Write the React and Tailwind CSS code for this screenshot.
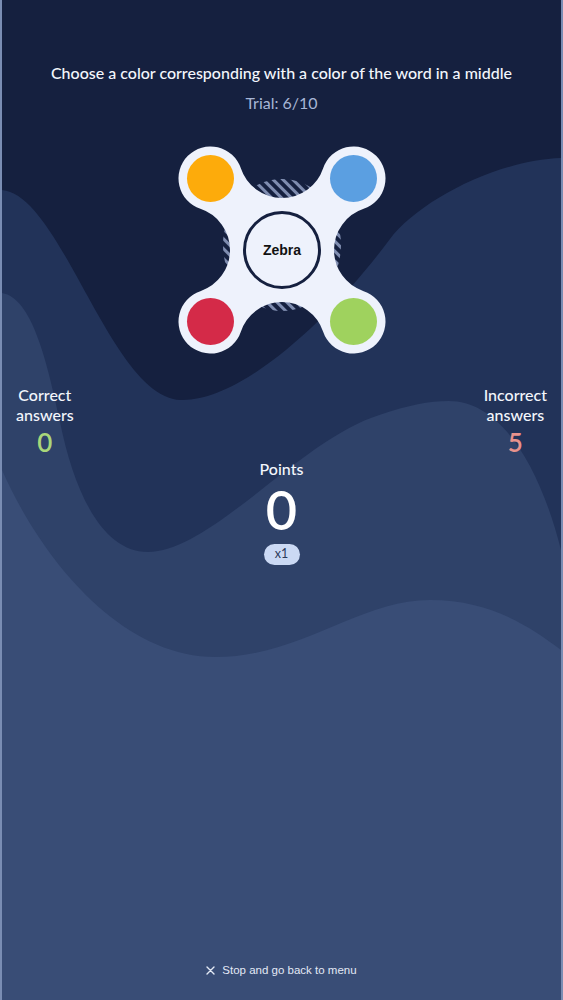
import React from "react";

function Waves() {
  return (
    <svg
      className="absolute inset-0 w-full h-full"
      viewBox="0 0 563 1000"
      preserveAspectRatio="none"
    >
      <rect x="0" y="0" width="563" height="1000" fill="#15203f" />
      <path
        d="M0,190 C60,195 110,398 180,400 C240,402 330,320 390,240 C420,200 500,160 563,158 L563,1000 L0,1000 Z"
        fill="#223359"
      />
      <path
        d="M0,293 C30,298 45,360 58,420 C72,490 100,552 147,552 C210,552 300,440 380,415 C410,405 430,401 450,401 C500,401 540,460 563,550 L563,1000 L0,1000 Z"
        fill="#2f4269"
      />
      <path
        d="M0,470 C40,560 120,657 215,657 C300,657 360,600 431,600 C490,600 530,625 563,650 L563,1000 L0,1000 Z"
        fill="#394d76"
      />
    </svg>
  );
}

function Spinner() {
  const body =
    "M -41.15 -81.64 A 43.38 43.38 0 0 0 41.15 -81.64 A 32 32 0 1 1 81.64 -41.15 " +
    "A 43.38 43.38 0 0 0 81.64 41.15 A 32 32 0 1 1 41.15 81.64 " +
    "A 43.38 43.38 0 0 0 -41.15 81.64 A 32 32 0 1 1 -81.64 41.15 " +
    "A 43.38 43.38 0 0 0 -81.64 -41.15 A 32 32 0 1 1 -41.15 -81.64 Z";
  return (
    <svg width="220" height="220" viewBox="-110 -110 220 220" className="block">
      <defs>
        <pattern
          id="hatch"
          patternUnits="userSpaceOnUse"
          width="7"
          height="7"
          patternTransform="rotate(-45)"
        >
          <rect x="0" y="0" width="3" height="7" fill="#7f8db0" />
        </pattern>
      </defs>
      <ellipse cx="0" cy="-5" rx="59" ry="66" fill="url(#hatch)" />
      <path d={body} fill="#eef2fc" />
      <circle cx="-71.5" cy="-71.5" r="23.5" fill="#fdab0b" />
      <circle cx="71.5" cy="-71.5" r="23.5" fill="#5b9fe1" />
      <circle cx="-71.5" cy="71.5" r="23.5" fill="#d42a48" />
      <circle cx="71.5" cy="71.5" r="23.5" fill="#9fd25e" />
      <circle cx="0" cy="0" r="37.5" fill="#eef2fc" stroke="#15203f" strokeWidth="3" />
      <text
        x="0"
        y="5"
        textAnchor="middle"
        fontFamily="'Liberation Sans', Arial, sans-serif"
        fontWeight="700"
        fontSize="14"
        fill="#111111"
      >
        Zebra
      </text>
    </svg>
  );
}

export default function App() {
  return (
    <div
      className="relative h-[1000px] w-full overflow-hidden border-x-2 border-[#7a8db3] bg-[#15203f] text-white"
      style={{ fontFamily: "Lato, 'Noto Sans', sans-serif" }}
    >
      <Waves />
      <div className="relative z-10 flex h-full flex-col items-center">
        <h1 className="pt-[61px] text-[16px] font-medium leading-[24px] text-[#f3f6fc]">
          Choose a color corresponding with a color of the word in a middle
        </h1>
        <div className="mt-[6px] text-[16px] leading-[24px] text-[#a7b6d6]">Trial: 6/10</div>
        <div className="mt-[25px]">
          <Spinner />
        </div>
        <div className="mt-[25px] flex w-full justify-between px-[14px]">
          <div className="flex flex-col items-center text-center">
            <div className="text-[16px] font-medium leading-[20px] text-[#f3f6fc]">
              Correct
              <br />
              answers
            </div>
            <div className="mt-[2px] text-[26px] font-semibold leading-[30px] text-[#a9d77a]">0</div>
          </div>
          <div className="flex flex-col items-center text-center">
            <div className="text-[16px] font-medium leading-[20px] text-[#f3f6fc]">
              Incorrect
              <br />
              answers
            </div>
            <div className="mt-[2px] text-[26px] font-semibold leading-[30px] text-[#e8928c]">5</div>
          </div>
        </div>
        <div className="mt-[2px] text-[16px] font-medium leading-[20px] text-[#f3f6fc]">Points</div>
        <div className="mt-[4px] text-[54px] font-semibold leading-[54px] text-white">0</div>
        <div className="mt-[7px] flex h-[21px] w-[36px] items-center justify-center rounded-full bg-[#cbd9f4] text-[12.5px] text-[#2b3a5a]">
          x1
        </div>
        <div
          className="mt-auto mb-[22px] flex items-center gap-[7px] text-[11.5px] leading-[16px] text-[#e3e9f5]"
          style={{ fontFamily: "'Liberation Sans', Arial, sans-serif" }}
        >
          <svg width="9" height="9" viewBox="0 0 9 9" className="block">
            <path d="M1 1 L8 8 M8 1 L1 8" stroke="#e3e9f5" strokeWidth="1.4" strokeLinecap="round" />
          </svg>
          <span>Stop and go back to menu</span>
        </div>
      </div>
    </div>
  );
}
